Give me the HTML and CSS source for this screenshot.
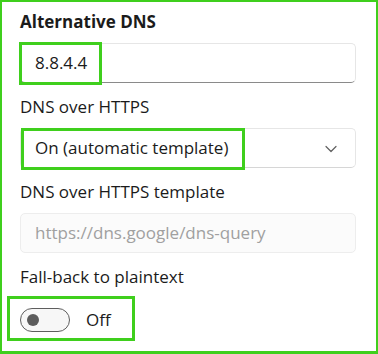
FILE: index.html
```html
<!DOCTYPE html>
<html>
<head>
<meta charset="utf-8">
<link rel="stylesheet" href="styles.css">
</head>
<body>
<div class="frame">
  <div class="group first">
    <div class="label bold">Alternative DNS</div>
    <div class="field input">
      <span class="value">8.8.4.4</span>
      <span class="hl hl-input"></span>
    </div>
  </div>
  <div class="group">
    <div class="label">DNS over HTTPS</div>
    <div class="field select">
      <span class="value">On (automatic template)</span>
      <svg class="chev" width="12" height="8" viewBox="0 0 12 8"><path d="M1 1.5 L6 6.5 L11 1.5" fill="none" stroke="#606060" stroke-width="1.2" stroke-linecap="round" stroke-linejoin="round"/></svg>
      <span class="hl hl-select"></span>
    </div>
  </div>
  <div class="group">
    <div class="label">DNS over HTTPS template</div>
    <div class="field disabled">
      <span class="value placeholder">https://dns.google/dns-query</span>
    </div>
  </div>
  <div class="group">
    <div class="label">Fall-back to plaintext</div>
    <div class="toggle-row">
      <span class="toggle"><span class="knob"></span></span>
      <span class="toggle-text">Off</span>
      <span class="hl hl-toggle"></span>
    </div>
  </div>
</div>
</body>
</html>
```
FILE: styles.css
```css
html, body {
  margin: 0;
  padding: 0;
  background: #ffffff;
}
.frame {
  box-sizing: border-box;
  width: 378px;
  height: 354px;
  border: 2px solid #3fcf1d;
  border-bottom-width: 3px;
  padding: 0 20px 0 18px;
  font-family: "Open Sans", "Noto Sans", sans-serif;
  font-size: 17px;
  color: #1b1b1b;
  display: flex;
  flex-direction: column;
}
.group {
  display: flex;
  flex-direction: column;
}
.group.first {
  padding-top: 9px;
}
.label {
  line-height: 22px;
  height: 22px;
  margin-top: 13px;
  margin-bottom: 10px;
}
.group.first .label {
  margin-top: 0;
}
.bold {
  font-weight: 700;
}
.field {
  position: relative;
  box-sizing: border-box;
  height: 40px;
  width: 336px;
  border: 1px solid #e6e6e6;
  border-radius: 5px;
  display: flex;
  align-items: center;
  padding-left: 14px;
  background: #ffffff;
}
.input {
  border-bottom: 1px solid #8a8a8a;
}
.select {
  border-bottom-color: #d6d6d6;
}
.disabled {
  background: #fbfbfb;
  border-color: #ededed;
}
.value {
  line-height: 22px;
}
.placeholder {
  color: #a0a0a0;
}
.chev {
  position: absolute;
  right: 18px;
  top: 16px;
}
.hl {
  position: absolute;
  border: 3px solid #3fcf1d;
  box-sizing: border-box;
  pointer-events: none;
}
.hl-input {
  left: -2px;
  top: -2px;
  width: 83px;
  height: 43px;
}
.hl-select {
  left: 0px;
  top: -1px;
  width: 224px;
  height: 42px;
}
.toggle-row {
  position: relative;
  display: flex;
  align-items: center;
  height: 26px;
  margin-top: 9px;
}
.toggle {
  box-sizing: border-box;
  width: 50px;
  height: 24px;
  border: 1px solid #5e5e5e;
  border-radius: 12px;
  background: #f7f7f7;
  display: flex;
  align-items: center;
  padding-left: 6px;
}
.knob {
  width: 12px;
  height: 12px;
  border-radius: 50%;
  background: #5c5c5c;
}
.toggle-text {
  margin-left: 16px;
  line-height: 22px;
}
.hl-toggle {
  left: -13px;
  top: -11px;
  width: 128px;
  height: 45px;
}
```
